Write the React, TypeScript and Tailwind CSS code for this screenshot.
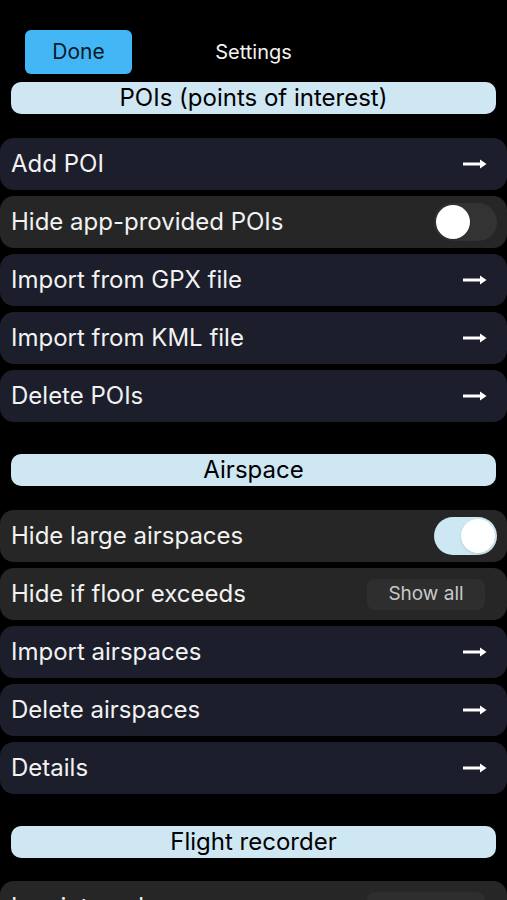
import { ReactNode } from 'react';

const FONT = { fontFamily: 'Inter, "Noto Sans", "Liberation Sans", sans-serif' };

function Arrow() {
    return (
        <svg width="24" height="10" viewBox="0 0 24 10" className="shrink-0 mr-[10px]">
            <path d="M0 5H20" stroke="#fff" strokeWidth="3" />
            <path d="M17 0.5L23.5 5L17 9.5Z" fill="#fff" />
        </svg>
    );
}

function Toggle({ on }: { on: boolean }) {
    return (
        <div className={`w-[63px] h-[38px] rounded-full p-[2px] flex items-center ${on ? 'bg-[#cde7f3] justify-end' : 'bg-[#333333] justify-start'}`}>
            <div className="w-[34px] h-[34px] rounded-full bg-white shadow" />
        </div>
    );
}

function Row({ label, navy, right }: { label: string; navy?: boolean; right: ReactNode }) {
    return (
        <div className={`h-[52px] rounded-[14px] flex items-center justify-between pl-[11px] pr-[10px] ${navy ? 'bg-[#1c1e2b]' : 'bg-[#262626]'}`}>
            <span className="text-[24px] leading-none text-[#f2f2f2]">{label}</span>
            {right}
        </div>
    );
}

function Header({ title }: { title: string }) {
    return (
        <div className="mx-[11px] h-[32px] rounded-[10px] bg-[#cfe7f3] flex items-center justify-center">
            <span className="text-[24px] leading-none text-black">{title}</span>
        </div>
    );
}

export default function App() {
    return (
        <div className="w-[507px] h-[900px] bg-black overflow-hidden" style={FONT}>
            <div className="pt-[30px] grid grid-cols-[1fr_auto_1fr] items-center">
                <div className="pl-[25px]">
                    <button className="w-[107px] h-[44px] rounded-[6px] bg-[#43b6f5] text-[21px] text-[#0b1a26]">Done</button>
                </div>
                <span className="text-[20px] text-[#f2f2f2]">Settings</span>
                <div />
            </div>

            <div className="mt-[8px]">
                <Header title="POIs (points of interest)" />
            </div>
            <div className="mt-[24px] flex flex-col gap-[6px]">
                <Row navy label="Add POI" right={<Arrow />} />
                <Row label="Hide app-provided POIs" right={<Toggle on={false} />} />
                <Row navy label="Import from GPX file" right={<Arrow />} />
                <Row navy label="Import from KML file" right={<Arrow />} />
                <Row navy label="Delete POIs" right={<Arrow />} />
            </div>

            <div className="mt-[32px]">
                <Header title="Airspace" />
            </div>
            <div className="mt-[24px] flex flex-col gap-[6px]">
                <Row label="Hide large airspaces" right={<Toggle on />} />
                <Row
                    label="Hide if floor exceeds"
                    right={
                        <div className="w-[118px] h-[31px] mr-[12px] rounded-[8px] bg-[#2e2e2e] flex items-center justify-center text-[19px] text-[#c9c9c9]">
                            Show all
                        </div>
                    }
                />
                <Row navy label="Import airspaces" right={<Arrow />} />
                <Row navy label="Delete airspaces" right={<Arrow />} />
                <Row navy label="Details" right={<Arrow />} />
            </div>

            <div className="mt-[32px]">
                <Header title="Flight recorder" />
            </div>
            <div className="mt-[23px] flex flex-col gap-[6px]">
                <Row label="Log interval" right={<div className="w-[118px] h-[31px] mr-[12px] rounded-[8px] bg-[#2e2e2e]" />} />
            </div>
        </div>
    );
}
